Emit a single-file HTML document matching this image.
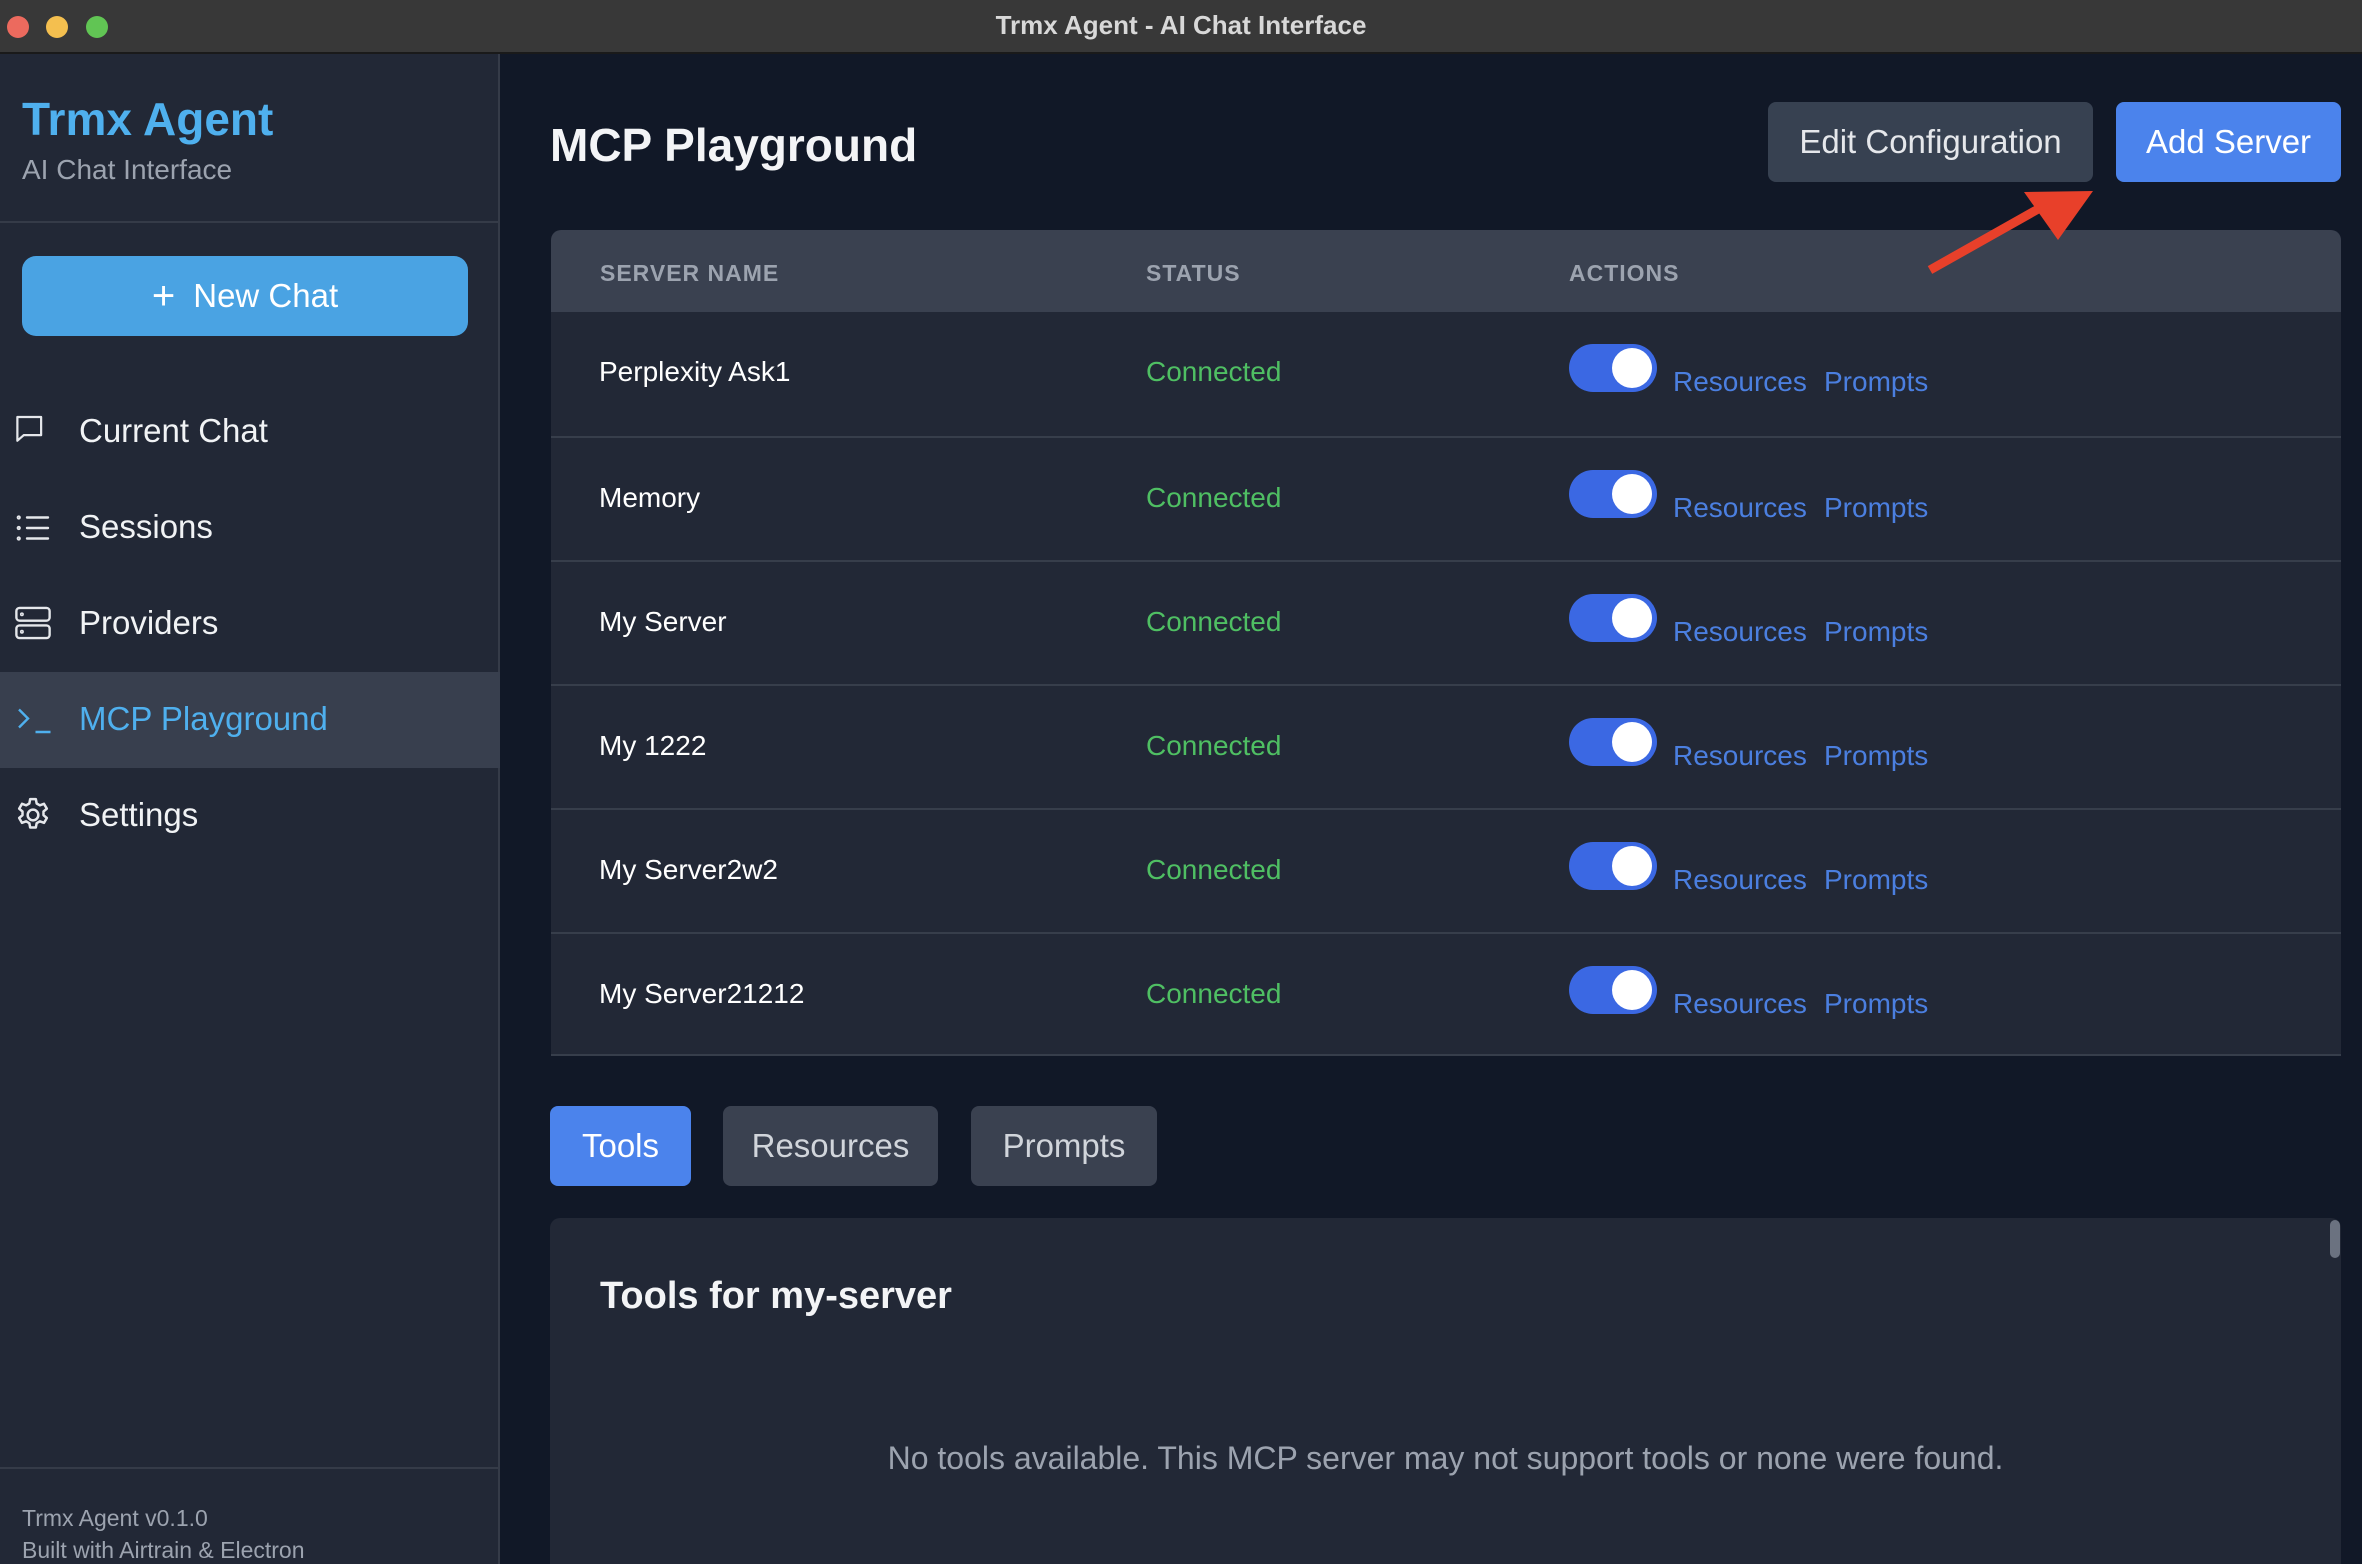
<!DOCTYPE html>
<html><head><meta charset="utf-8"><style>
*{margin:0;padding:0;box-sizing:border-box}
html,body{width:2362px;height:1564px;overflow:hidden}
body{background:#111827;font-family:"Liberation Sans",sans-serif;position:relative;color:#fff}
.a{position:absolute;white-space:nowrap}
.tb{left:0;top:0;width:2362px;height:54px;background:#383838;border-bottom:2px solid #1a1a1a}
.dot{position:absolute;top:16px;width:22px;height:22px;border-radius:50%}
.side{left:0;top:54px;width:500px;height:1510px;background:#222836;border-right:2px solid #353b48}
.nav{font-size:33px;color:#f1f3f5;left:79px}
.hdr{font-size:23px;font-weight:bold;color:#9ca3af;letter-spacing:1px;top:260px}
.row{left:551px;width:1790px;height:124px;background:#222836;border-top:2px solid #373e4b}
.nm{left:48px;top:44px;font-size:28px;color:#fff}
.st{left:595px;top:44px;font-size:28px;color:#4fbf63}
.tg{left:1018px;top:32px;width:88px;height:48px;border-radius:24px;background:#3b68e3}
.tg::after{content:"";position:absolute;right:5px;top:4px;width:40px;height:40px;border-radius:50%;background:#fff}
.lk{top:54px;font-size:28px;color:#4b7fe0}
.btn{border-radius:8px;font-size:33px;display:flex;align-items:center;justify-content:center}
</style></head><body>
<div class="a tb"></div>
<div class="dot" style="left:7px;background:#ec6a5e"></div>
<div class="dot" style="left:46px;background:#f4bf4f"></div>
<div class="dot" style="left:86px;background:#61c554"></div>
<div class="a" style="left:0;width:2362px;top:10px;text-align:center;font-size:26px;font-weight:bold;color:#d8d8d8">Trmx Agent - AI Chat Interface</div>

<div class="a side"></div>
<div class="a" style="left:22px;top:92px;font-size:46px;font-weight:bold;color:#4fb0ee">Trmx Agent</div>
<div class="a" style="left:22px;top:154px;font-size:28px;color:#9ca3af">AI Chat Interface</div>
<div class="a" style="left:0;top:221px;width:500px;height:2px;background:#353b48"></div>
<div class="a btn" style="left:22px;top:256px;width:446px;height:80px;background:#4aa3e3;border-radius:14px;color:#fff"><span style="font-size:40px;margin-right:18px;font-weight:300">+</span>New Chat</div>

<svg class="a" style="left:15px;top:413px" width="38" height="38" viewBox="0 0 24 24" fill="none" stroke="#e5e7eb" stroke-width="1.4"><path d="M1.5 2.5h15v11.5h-11l-4 3.5z" stroke-linejoin="round"/></svg>
<div class="a nav" style="top:412px">Current Chat</div>
<svg class="a" style="left:15px;top:510px" width="36" height="36" viewBox="0 0 24 24" fill="none" stroke="#e5e7eb" stroke-width="1.6" stroke-linecap="round"><path d="M8 5h14M8 12h14M8 19h14"/><circle cx="2.5" cy="5" r=".6"/><circle cx="2.5" cy="12" r=".6"/><circle cx="2.5" cy="19" r=".6"/></svg>
<div class="a nav" style="top:508px">Sessions</div>
<svg class="a" style="left:14px;top:604px" width="38" height="38" viewBox="0 0 24 24" fill="none" stroke="#e5e7eb" stroke-width="1.5"><rect x="1.5" y="2.5" width="21" height="8" rx="2"/><rect x="1.5" y="13.5" width="21" height="8" rx="2"/><circle cx="5" cy="6.5" r=".5"/><circle cx="5" cy="17.5" r=".5"/></svg>
<div class="a nav" style="top:604px">Providers</div>
<div class="a" style="left:0;top:672px;width:500px;height:96px;background:#383f4e"></div>
<svg class="a" style="left:16px;top:702px" width="36" height="36" viewBox="0 0 24 24" fill="none" stroke="#4fb0ee" stroke-width="1.6"><path d="M2 5l6 6-6 6M13 20h10"/></svg>
<div class="a nav" style="top:700px;color:#4fb0ee">MCP Playground</div>
<svg class="a" style="left:13px;top:795px" width="40" height="40" viewBox="0 0 24 24" fill="none" stroke="#e5e7eb" stroke-width="1.5" stroke-linejoin="round"><path d="M10.3 2.5h3.4l.5 2.6 1.9 1.1 2.5-.9 1.7 2.9-2 1.7v2.2l2 1.7-1.7 2.9-2.5-.9-1.9 1.1-.5 2.6h-3.4l-.5-2.6-1.9-1.1-2.5.9-1.7-2.9 2-1.7v-2.2l-2-1.7 1.7-2.9 2.5.9 1.9-1.1z"/><circle cx="12" cy="12" r="3.2"/></svg>
<div class="a nav" style="top:796px">Settings</div>
<div class="a" style="left:0;top:1467px;width:500px;height:2px;background:#353b48"></div>
<div class="a" style="left:22px;top:1505px;font-size:23px;color:#9ca3af">Trmx Agent v0.1.0</div>
<div class="a" style="left:22px;top:1537px;font-size:23px;color:#9ca3af">Built with Airtrain &amp; Electron</div>

<div class="a" style="left:550px;top:118px;font-size:46px;font-weight:bold;color:#f3f4f6">MCP Playground</div>
<div class="a btn" style="left:1768px;top:102px;width:325px;height:80px;background:#374151;color:#e5e7eb">Edit Configuration</div>
<div class="a btn" style="left:2116px;top:102px;width:225px;height:80px;background:#4b83ec;color:#fff">Add Server</div>

<div class="a" style="left:551px;top:230px;width:1790px;height:82px;background:#3a4150;border-radius:10px 10px 0 0"></div>
<div class="a hdr" style="left:600px">SERVER NAME</div>
<div class="a hdr" style="left:1146px">STATUS</div>
<div class="a hdr" style="left:1569px">ACTIONS</div>

<div class="a row" style="top:312px;border-top:none"><div class="a nm">Perplexity Ask1</div><div class="a st">Connected</div><div class="a tg"></div><div class="a lk" style="left:1122px">Resources</div><div class="a lk" style="left:1273px">Prompts</div></div>
<div class="a row" style="top:436px"><div class="a nm">Memory</div><div class="a st">Connected</div><div class="a tg"></div><div class="a lk" style="left:1122px">Resources</div><div class="a lk" style="left:1273px">Prompts</div></div>
<div class="a row" style="top:560px"><div class="a nm">My Server</div><div class="a st">Connected</div><div class="a tg"></div><div class="a lk" style="left:1122px">Resources</div><div class="a lk" style="left:1273px">Prompts</div></div>
<div class="a row" style="top:684px"><div class="a nm">My 1222</div><div class="a st">Connected</div><div class="a tg"></div><div class="a lk" style="left:1122px">Resources</div><div class="a lk" style="left:1273px">Prompts</div></div>
<div class="a row" style="top:808px"><div class="a nm">My Server2w2</div><div class="a st">Connected</div><div class="a tg"></div><div class="a lk" style="left:1122px">Resources</div><div class="a lk" style="left:1273px">Prompts</div></div>
<div class="a row" style="top:932px;border-bottom:2px solid #373e4b"><div class="a nm">My Server21212</div><div class="a st">Connected</div><div class="a tg"></div><div class="a lk" style="left:1122px">Resources</div><div class="a lk" style="left:1273px">Prompts</div></div>

<svg class="a" style="left:0;top:0" width="2362" height="400"><path d="M1930 270 L2040 208" stroke="#e8402a" stroke-width="9"/><path d="M2093 191 L2024 192 L2058 240 Z" fill="#e8402a"/></svg>

<div class="a btn" style="left:550px;top:1106px;width:141px;height:80px;background:#4b83ec;color:#fff">Tools</div>
<div class="a btn" style="left:723px;top:1106px;width:215px;height:80px;background:#3a4150;color:#d1d5db">Resources</div>
<div class="a btn" style="left:971px;top:1106px;width:186px;height:80px;background:#3a4150;color:#d1d5db">Prompts</div>

<div class="a" style="left:550px;top:1218px;width:1791px;height:346px;background:#222836;border-radius:10px 10px 0 0"></div>
<div class="a" style="left:2330px;top:1220px;width:10px;height:38px;border-radius:5px;background:#6b7280"></div>
<div class="a" style="left:600px;top:1275px;font-size:38px;font-weight:bold;color:#f3f4f6">Tools for my-server</div>
<div class="a" style="left:550px;width:1791px;top:1440px;text-align:center;font-size:32px;color:#9ca3af">No tools available. This MCP server may not support tools or none were found.</div>
</body></html>
